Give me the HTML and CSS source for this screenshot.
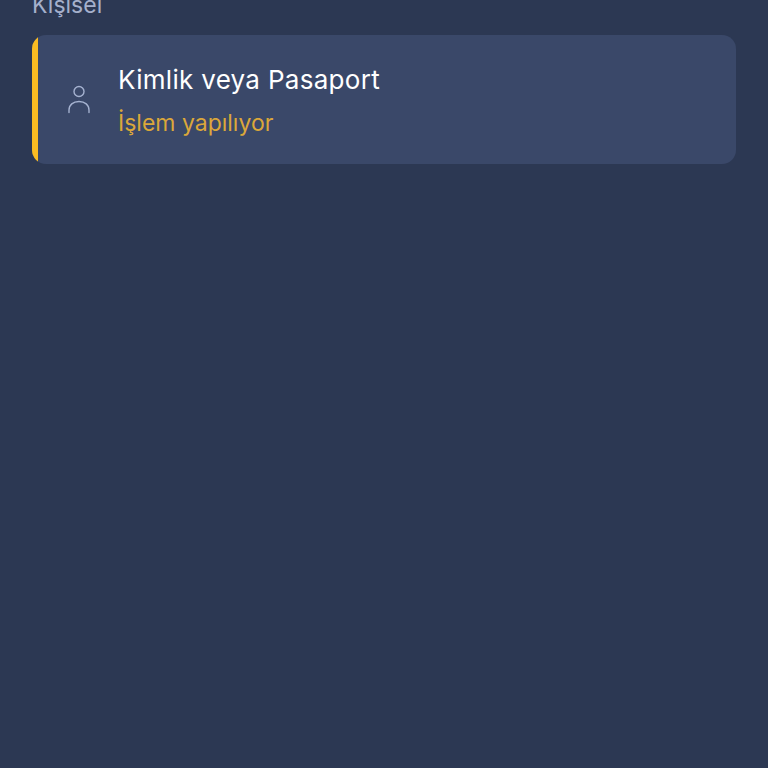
FILE: index.html
```html
<!DOCTYPE html>
<html lang="tr">
<head>
  <meta charset="UTF-8">
  <meta name="viewport" content="width=device-width, initial-scale=1.0">
  <link rel="stylesheet" href="styles.css">
  <title>Kişisel</title>
</head>
<body>
  <div class="section">
    <div class="section_title">Kişisel</div>
    <div class="card">
      <div class="card_bar"></div>
      <div class="card_icon">
        <svg width="24" height="30" viewBox="0 0 24 30" fill="none" stroke="#a5b2d0" stroke-width="1.4" stroke-linecap="round">
          <circle cx="12" cy="6.5" r="5"/>
          <path d="M2 27.5v-2.500c0-5 4-8.500 10-8.500s10 3.500 10 8.500v2.500"/>
        </svg>
      </div>
      <div class="card_text">
        <div class="card_title">Kimlik veya Pasaport</div>
        <div class="card_status">İşlem yapılıyor</div>
      </div>
    </div>
  </div>
</body>
</html>
```

FILE: styles.css
```css
* {
  box-sizing: border-box;
}

body {
  margin: 0;
  height: 100vh;
  overflow: hidden;
  background: #2c3853;
  font-family: Inter, "Noto Sans", sans-serif;
}

.section {
  padding: 0 32px;
}

.section_title {
  margin-top: -9px;
  margin-bottom: 16px;
  font-size: 23px;
  line-height: 28px;
  color: #a5b0cc;
}

.card {
  display: flex;
  align-items: center;
  height: 129px;
  border-radius: 14px;
  overflow: hidden;
  background: #3a4869;
}

.card_bar {
  align-self: stretch;
  width: 6px;
  flex-shrink: 0;
  background: #fbbc22;
}

.card_icon {
  display: flex;
  justify-content: center;
  width: 81px;
  padding-left: 1px;
  flex-shrink: 0;
}

.card_text {
  margin-left: -1px;
  padding-top: 2px;
}

.card_title {
  font-size: 26px;
  letter-spacing: 0.3px;
  line-height: 30px;
  color: #ffffff;
}

.card_status {
  margin-top: 14px;
  font-size: 23px;
  line-height: 28px;
  color: #dba73a;
}
```
